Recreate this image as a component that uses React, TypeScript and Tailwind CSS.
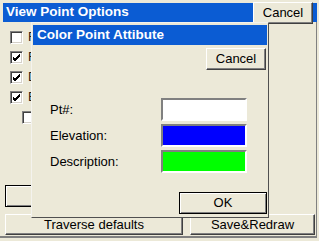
import React from "react";

function Check() {
    return (
        <svg width="9" height="9" viewBox="0 0 9 9" className="block">
            <path d="M1 4 L3 6 L8 1 M1 5 L3 7 L8 2 M1 6 L3 8 L8 3" stroke="#000" strokeWidth="1" fill="none" />
        </svg>
    )
}

function CheckBox({ checked }: { checked?: boolean }) {
    return (
        <div className="w-[13px] h-[13px] bg-white border border-t-[#808080] border-l-[#808080] border-r-white border-b-white shadow-[inset_1px_1px_0_#404040,inset_-1px_-1px_0_#d4d0c8] flex items-center justify-center shrink-0">
            {checked && <Check />}
        </div>
    )
}

function Btn({ children, className = "", isDefault = false }: { children?: React.ReactNode; className?: string; isDefault?: boolean }) {
    const frame = isDefault
        ? "border border-black shadow-[inset_1px_1px_0_#fff,inset_-1px_-1px_0_#808080]"
        : "border border-t-white border-l-white border-r-[#404040] border-b-[#404040] shadow-[inset_-1px_-1px_0_#808080]"
    return (
        <div className={`bg-[#ECE9D8] flex items-center justify-center text-[13px] text-black shrink-0 ${frame} ${className}`}>
            {children}
        </div>
    )
}

// the child dialog sits over these labels, only the first letters show
function OptionRow({ label, checked, indent }: { label: string; checked?: boolean; indent?: boolean }) {
    return (
        <div className={`h-[20px] flex items-center gap-[5px] ${indent ? "pl-[22px]" : "pl-[10px]"}`}>
            <CheckBox checked={checked} />
            <span className="text-[#2a1a10] whitespace-nowrap">{label}</span>
        </div>
    )
}

function ColorPointDialog() {
    return (
        <div className="absolute left-[31px] top-[22px] w-[238px] h-[196px] bg-[#ECE9D8] border border-t-[#f4f3ee] border-l-[#f4f3ee] border-r-[#505050] border-b-[#505050] flex flex-col">
            <div className="mt-[2px] mx-[1px] h-[20px] bg-[#0B5CD3] flex items-center pl-[4px]">
                <span className="text-white font-bold text-[13.5px] whitespace-nowrap">Color Point Attibute</span>
            </div>
            <div className="flex justify-end mt-[3px] mr-[2px]">
                <Btn className="w-[60px] h-[22px]">Cancel</Btn>
            </div>
            <div className="mt-[28px] pl-[18px] grid grid-cols-[111px_86px] gap-y-[3px] items-center">
                <span className="pt-[1px]">Pt#:</span>
                <div className="h-[23px] bg-white border-2 border-t-[#808080] border-l-[#808080] border-r-white border-b-white" />
                <span className="pt-[1px]">Elevation:</span>
                <div className="h-[23px] bg-[#0000FF] border-2 border-t-[#808080] border-l-[#808080] border-r-white border-b-white" />
                <span className="pt-[1px]">Description:</span>
                <div className="h-[23px] bg-[#00FF00] border-2 border-t-[#808080] border-l-[#808080] border-r-white border-b-white" />
            </div>
            <div className="flex justify-end mt-[19px] mr-[1px]">
                <Btn isDefault className="w-[88px] h-[22px]">OK</Btn>
            </div>
        </div>
    )
}

export default function App() {
    return (
        <div className="w-[319px] h-[241px] bg-[#ECE9D8] relative overflow-hidden font-['Liberation_Sans',Arial,sans-serif] text-[13px] text-black">
            <div className="mt-[3px] ml-[3px] mr-[2px] h-[19px] bg-[#0B5CD3] flex items-center justify-between pl-[3px] pr-[4px]">
                <span className="text-white font-bold text-[13.5px] whitespace-nowrap">View Point Options</span>
                <Btn className="w-[60px] h-[22px]">Cancel</Btn>
            </div>
            <div className="mr-[2px] border-r border-[#808080] h-[216px] flex flex-col">
                <div className="mt-[5px] flex flex-col">
                    <OptionRow label="Flags" />
                    <OptionRow label="Fix codes" checked />
                    <OptionRow label="Descriptions" checked />
                    <OptionRow label="Elevations" checked />
                    <OptionRow label="Labels" indent />
                </div>
                <div className="mt-[58px] ml-[5px]">
                    <Btn isDefault className="w-[120px] h-[22px]"></Btn>
                </div>
                <div className="mt-[7px] ml-[5px] flex gap-[7px]">
                    <Btn className="w-[178px] h-[21px]">Traverse defaults</Btn>
                    <Btn className="w-[125px] h-[21px]">Save&amp;Redraw</Btn>
                </div>
                <div className="mt-[1px] h-[2px] bg-[#808080]" />
            </div>
            <ColorPointDialog />
        </div>
    )
}
